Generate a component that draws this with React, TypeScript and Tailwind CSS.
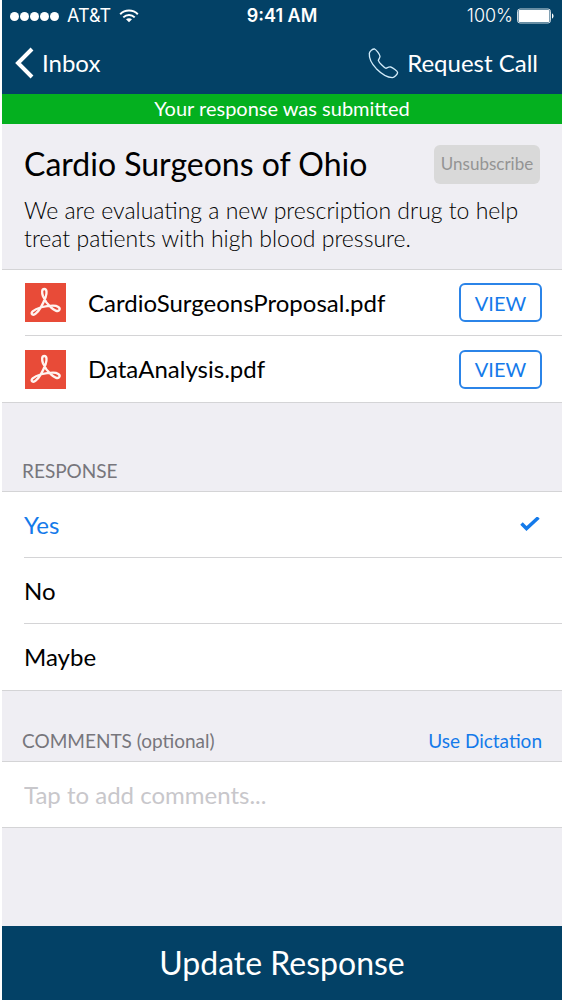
import { useState } from "react";

const files = ["CardioSurgeonsProposal.pdf", "DataAnalysis.pdf"];
const answers = ["Yes", "No", "Maybe"];

function WifiIcon() {
    return (
        <svg className="h-4 w-5" viewBox="0 0 20 16" fill="none" stroke="currentColor" strokeWidth="2">
            <path d="M1.2 6.2C6 1.4 14 1.4 18.8 6.2" />
            <path d="M4.3 9.4C7.5 6.3 12.5 6.3 15.7 9.4" />
            <path d="M10 14.2l-3-2.9c1.7-1.5 4.3-1.5 6 0z" fill="currentColor" stroke="none" />
        </svg>
    );
}

function BatteryIcon() {
    return (
        <svg className="h-4 w-[37px]" viewBox="0 0 37 16">
            <rect x="0.5" y="1" width="33" height="14" rx="2.5" fill="none" stroke="currentColor" opacity="0.8" />
            <rect x="1.5" y="2" width="31" height="12" rx="1" fill="currentColor" />
            <path d="M35 5.5c2 0.5 2 4.5 0 5z" fill="currentColor" />
        </svg>
    );
}

function PhoneIcon() {
    return (
        <svg className="h-8 w-8" viewBox="0 0 96 96" fill="none" stroke="#d3ecfa" strokeWidth="4" strokeLinejoin="round">
            <path d="M23 6C17 5 8 13 7 19C6 31 14 50 28 65C44 81 61 91 76 92C82 92 91 82 92 77C92 73 77 62 71 60C65 59 60 63 57 64C52 63 36 47 34 40C35 36 39 33 39 28C38 22 28 8 23 6Z" />
        </svg>
    );
}

function PdfIcon() {
    return (
        <svg className="h-[39px] w-[41px] shrink-0" viewBox="0 0 123 117" fill="none">
            <rect width="123" height="117" fill="#e84b38" />
            <path
                d="M58 18C66 18 66 30 62 42C56 58 44 82 32 92C24 99 15 92 23 85C34 75 60 68 84 68C97 68 107 74 103 81C99 88 86 81 78 73C68 64 59 52 54 40C50 28 50 18 58 18Z"
                stroke="#fff4f0"
                strokeWidth="7"
            />
        </svg>
    );
}

export default function App() {
    const [answer, setAnswer] = useState("Yes");

    return (
        <div className="flex min-h-screen flex-col bg-white pl-0.5 pr-px font-['Lato',sans-serif] text-black">
            <header className="bg-[#034166] text-white">
                <div className="grid h-8 grid-cols-3 items-center px-2 font-['Inter',sans-serif] text-lg">
                    <div className="flex items-center gap-2">
                        <div className="flex gap-px">
                            {[1, 2, 3, 4, 5].map((n) => (
                                <span key={n} className="h-[9px] w-[9px] rounded-full bg-white" />
                            ))}
                        </div>
                        <span>AT&amp;T</span>
                        <WifiIcon />
                    </div>
                    <span className="whitespace-nowrap text-center font-semibold">9:41 AM</span>
                    <div className="flex items-center justify-end gap-1">
                        <span className="font-light">100%</span>
                        <BatteryIcon />
                    </div>
                </div>
                <nav className="flex h-[62px] items-center justify-between pl-3 pr-6 text-2xl">
                    <a href="#inbox" className="flex items-center gap-2">
                        <svg className="h-8 w-5" viewBox="0 0 20 32" fill="none" stroke="currentColor" strokeWidth="4">
                            <path d="M18 2L4 16L18 30" />
                        </svg>
                        Inbox
                    </a>
                    <button className="flex items-center gap-2">
                        <PhoneIcon />
                        Request Call
                    </button>
                </nav>
            </header>

            <p className="h-[30px] bg-[#04b01f] text-center text-xl leading-7 text-white" role="status">
                Your response was submitted
            </p>

            <main className="flex flex-1 flex-col bg-[#efeef3]">
                <section className="h-[145px] px-[22px] pt-5">
                    <div className="flex items-center justify-between">
                        <h1 className="text-[32px] leading-10">Cardio Surgeons of Ohio</h1>
                        <button className="h-[39px] w-[106px] rounded-md bg-[#d9d9d9] text-[17px] text-[#949494]">
                            Unsubscribe
                        </button>
                    </div>
                    <p className="mt-3 text-[23px] font-light leading-7">
                        We are evaluating a new prescription drug to help treat patients with high blood pressure.
                    </p>
                </section>

                <ul className="border-y border-[#d4d4d6] bg-white pl-[23px]">
                    {files.map((file) => (
                        <li
                            key={file}
                            className="flex h-[66px] items-center border-b border-[#d4d4d6] pr-5 text-2xl last:border-b-0"
                        >
                            <PdfIcon />
                            <span className="flex-1 pl-[22px]">{file}</span>
                            <button className="h-[39px] w-[83px] rounded-md border-2 border-[#2b84e8] text-xl text-[#147aea]">
                                VIEW
                            </button>
                        </li>
                    ))}
                </ul>

                <fieldset>
                    <legend className="flex h-[88px] items-end px-5 pb-1.5 text-[19px] leading-7 text-[#77767c]">
                        RESPONSE
                    </legend>
                    <div className="border-y border-[#d4d4d6] bg-white pl-[22px]">
                        {answers.map((item) => (
                            <label
                                key={item}
                                className="flex h-[66px] items-center justify-between border-b border-[#d4d4d6] pr-[22px] text-2xl last:border-b-0 has-checked:text-[#147aea]"
                            >
                                {item}
                                <input
                                    type="radio"
                                    name="response"
                                    className="sr-only"
                                    checked={answer === item}
                                    onChange={() => setAnswer(item)}
                                />
                                {answer === item && (
                                    <svg className="h-4 w-5" viewBox="0 0 20 16" fill="none" stroke="currentColor" strokeWidth="3.5">
                                        <path d="M1.5 6.5L6.5 11.5L18.5 0.5" />
                                    </svg>
                                )}
                            </label>
                        ))}
                    </div>
                </fieldset>

                <section>
                    <div className="flex h-[70px] items-end justify-between px-5 pb-1.5 text-[19px] leading-7">
                        <label htmlFor="comments" className="text-[#77767c]">
                            COMMENTS (optional)
                        </label>
                        <button className="text-[#147aea]">Use Dictation</button>
                    </div>
                    <input
                        id="comments"
                        type="text"
                        placeholder="Tap to add comments..."
                        className="block h-[67px] w-full border-y border-[#d4d4d6] bg-white px-[22px] text-2xl placeholder:text-[#c8c7cb]"
                    />
                </section>
            </main>

            <button className="h-[74px] bg-[#034166] text-[32px] text-white">Update Response</button>
        </div>
    );
}
